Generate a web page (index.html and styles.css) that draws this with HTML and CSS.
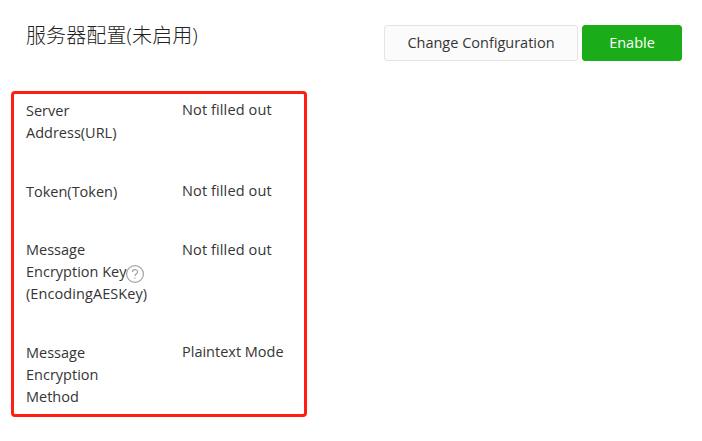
FILE: index.html
```html
<!DOCTYPE html>
<html lang="zh-CN">
<head>
<meta charset="utf-8">
<title>服务器配置</title>
<link rel="stylesheet" href="styles.css">
</head>
<body>
<header class="header">
  <h1 class="title">服务器配置(未启用)</h1>
  <div class="actions">
    <button class="btn btn-default">Change Configuration</button>
    <button class="btn btn-primary">Enable</button>
  </div>
</header>
<main class="panel">
  <dl class="row row-address">
    <dt>Server<br>Address(URL)</dt>
    <dd>Not filled out</dd>
  </dl>
  <dl class="row row-token">
    <dt>Token(Token)</dt>
    <dd>Not filled out</dd>
  </dl>
  <dl class="row row-key">
    <dt>Message<br>Encryption Key<svg class="help" viewBox="0 0 20 20" aria-label="Help"><circle cx="10" cy="10" r="8.4"/><path d="M7.4 8.1C7.4 4.7 12.6 4.8 12.6 7.8C12.6 9.7 10 9.7 10 12"/><path d="M10 13.5V14.8"/></svg><br><span class="key-name">(EncodingAESKey)</span></dt>
    <dd>Not filled out</dd>
  </dl>
  <dl class="row row-method">
    <dt>Message<br>Encryption<br>Method</dt>
    <dd>Plaintext Mode</dd>
  </dl>
</main>
</body>
</html>
```

FILE: styles.css
```css
* { box-sizing: border-box; }
body {
  margin: 0;
  background: #fff;
  color: #353535;
  font: 14.5px/22px "Open Sans", "Noto Sans CJK SC", sans-serif;
}
.header {
  display: flex;
  justify-content: space-between;
  height: 91px;
  padding: 25px 20px 0 26px;
}
.title {
  margin: -1px 0 0;
  color: #222;
  font-size: 20px;
  font-weight: 300;
  line-height: 24px;
  letter-spacing: .1px;
}
.actions { display: flex; gap: 4px; }
.btn {
  height: 36px;
  padding: 0;
  border: 1px solid #e4e4e4;
  border-radius: 3px;
  background: #fbfbfb;
  color: #353535;
  font: inherit;
}
.btn-default { width: 194px; }
.btn-primary {
  width: 100px;
  border-color: #1aad19;
  background: #1aad19;
  color: #fff;
}
.panel {
  width: 296px;
  height: 326px;
  margin-left: 11px;
  padding: 6px 0 0 12px;
  border: 3px solid #ff1e10;
  border-radius: 4px;
}
.row {
  display: grid;
  grid-template-columns: 156px 1fr;
  margin: 0;
}
.row-address { height: 81px; }
.row-token { height: 58px; }
.row-key { height: 103px; }
dt { white-space: nowrap; }
dd {
  margin: -1px 0 0;
  letter-spacing: .12px;
}
.row-key dd { margin-top: 0; }
.row-method dd { letter-spacing: 0; }
.key-name { letter-spacing: .08px; }
.help {
  width: 20px;
  height: 20px;
  margin: -4px 0 -4px -1px;
  vertical-align: -3px;
  fill: none;
  stroke: #a3a3a3;
  stroke-width: 1.2;
}
```
